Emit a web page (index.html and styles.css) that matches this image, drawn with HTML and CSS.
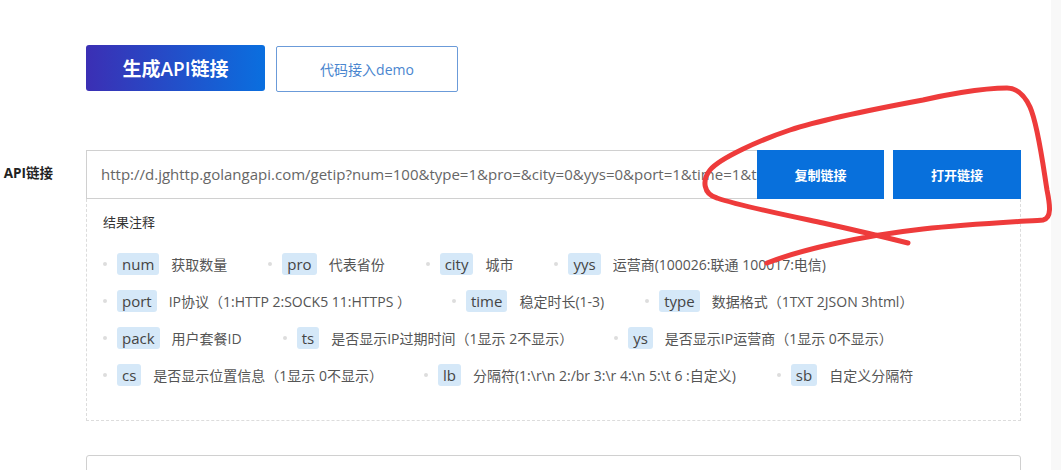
FILE: index.html
```html
<!DOCTYPE html>
<html lang="zh-CN">
<head>
    <meta charset="UTF-8">
    <meta name="viewport" content="width=device-width, initial-scale=1.0">
    <title>API链接</title>
    <link rel="stylesheet" href="styles.css">
</head>
<body>
    <div class="page">
        <div class="actions">
            <button class="btn-generate">生成API链接</button>
            <button class="btn-demo">代码接入demo</button>
        </div>

        <div class="api-row">
            <div class="api-label">API链接</div>
            <div class="api-main">
                <div class="link-bar">
                    <div class="link-input">http://d.jghttp.golangapi.com/getip?num=100&amp;type=1&amp;pro=&amp;city=0&amp;yys=0&amp;port=1&amp;time=1&amp;ts=0&amp;ys=0&amp;cs=0&amp;lb=1&amp;sb=0&amp;pb=4&amp;mr=1&amp;regions=</div>
                    <button class="btn-link">复制链接</button>
                    <button class="btn-link">打开链接</button>
                </div>

                <div class="notes">
                    <p class="notes-title">结果注释</p>
                    <div class="param-row">
                        <div class="param"><span class="tag">num</span>获取数量</div>
                        <div class="param"><span class="tag">pro</span>代表省份</div>
                        <div class="param"><span class="tag">city</span>城市</div>
                        <div class="param"><span class="tag">yys</span>运营商(100026:联通 100017:电信)</div>
                    </div>
                    <div class="param-row">
                        <div class="param"><span class="tag">port</span>IP协议（1:HTTP 2:SOCK5 11:HTTPS ）</div>
                        <div class="param"><span class="tag">time</span>稳定时长(1-3)</div>
                        <div class="param"><span class="tag">type</span>数据格式（1TXT 2JSON 3html）</div>
                    </div>
                    <div class="param-row">
                        <div class="param"><span class="tag">pack</span>用户套餐ID</div>
                        <div class="param"><span class="tag">ts</span>是否显示IP过期时间（1显示 2不显示）</div>
                        <div class="param"><span class="tag">ys</span>是否显示IP运营商（1显示 0不显示）</div>
                    </div>
                    <div class="param-row">
                        <div class="param"><span class="tag">cs</span>是否显示位置信息（1显示 0不显示）</div>
                        <div class="param"><span class="tag">lb</span>分隔符(1:\r\n 2:/br 3:\r 4:\n 5:\t 6 :自定义)</div>
                        <div class="param"><span class="tag">sb</span>自定义分隔符</div>
                    </div>
                </div>

                <div class="next-box"></div>
            </div>
        </div>
    </div>

    <!-- red marker circle over the link buttons -->
    <svg class="scribble" width="1061" height="470" viewBox="0 0 1061 470">
        <path d="M 767 263 C 800 250, 860 236, 923 229 C 970 224, 1030 221, 1043 220 C 1052 218, 1050 205, 1047 190 C 1043 165, 1038 125, 1030 107 C 1024 94, 1016 88, 1007 88 C 980 88, 940 96, 923 100 C 880 108, 820 120, 790 130 C 760 140, 720 158, 710 170 C 702 180, 703 194, 717 198 C 740 206, 790 216, 823 223 C 850 229, 880 236, 908 243" fill="none" stroke="#ee3b3b" stroke-width="5" stroke-linecap="round" stroke-linejoin="round"/>
    </svg>
</body>
</html>
```

FILE: styles.css
```css
:root {
    --blue: #0870dc;
    --tag-bg: #d5e8f8;
    --text: #444;
    --border: #d0d0d0;
}

* {
    margin: 0;
    padding: 0;
    box-sizing: border-box;
}

body {
    font-family: "Open Sans", "Noto Sans CJK SC", sans-serif;
    color: var(--text);
    background: linear-gradient(to right, #fff 1051px, #f8f8f8 1051px);
    overflow: hidden;
}

.page {
    padding-top: 45px;
}

.actions {
    display: flex;
    gap: 11px;
    padding-left: 86px;
}

button {
    font-family: inherit;
    cursor: pointer;
}

.btn-generate {
    width: 179px;
    height: 46px;
    border: none;
    border-radius: 3px;
    background: linear-gradient(90deg, #3b2fb4, #0a6fdf);
    color: #fff;
    font-size: 19px;
    font-weight: 600;
}

.btn-demo {
    width: 182px;
    height: 46px;
    margin-top: 1px;
    border: 1px solid #6b9bd9;
    border-radius: 2px;
    background: #fff;
    color: #4a86cf;
    font-size: 14px;
}

.api-row {
    display: flex;
    margin-top: 58px;
}

.api-label {
    width: 86px;
    padding-right: 33px;
    line-height: 47px;
    text-align: right;
    font-size: 13.5px;
    font-weight: 700;
    color: #222;
    white-space: nowrap;
}

.api-main {
    width: 935px;
}

.link-bar {
    display: flex;
    height: 49px;
}

.link-input {
    flex: 1;
    min-width: 0;
    padding-left: 14px;
    border: 1px solid var(--border);
    border-right: none;
    line-height: 47px;
    font-size: 15px;
    color: #666;
    white-space: nowrap;
    overflow: hidden;
}

.btn-link {
    width: 127px;
    border: none;
    background: var(--blue);
    color: #fff;
    font-size: 13px;
    font-weight: 600;
}

.btn-link + .btn-link {
    width: 128px;
    margin-left: 9px;
}

.notes {
    border: 1px dashed #dcdcdc;
    border-top: none;
    padding: 13px 0 34px 16px;
}

.notes-title {
    font-size: 13px;
    line-height: 20px;
    color: #333;
    margin-bottom: 21px;
}

.param-row {
    display: flex;
    align-items: center;
    gap: 41px;
    height: 22px;
    margin-bottom: 15px;
}

.param-row:last-child {
    margin-bottom: 0;
}

.param {
    display: flex;
    align-items: center;
    font-size: 14px;
    color: #555;
    white-space: nowrap;
}

.param::before {
    content: "";
    width: 4px;
    height: 4px;
    border-radius: 50%;
    background: #ddd;
    margin: 0 10px 0 0;
}

.tag {
    display: inline-block;
    height: 22px;
    line-height: 22px;
    padding: 0 5px;
    margin-right: 12px;
    border-radius: 3px;
    background: var(--tag-bg);
    color: #444;
    font-size: 15px;
}

.next-box {
    height: 40px;
    margin-top: 34px;
    border: 1px solid var(--border);
    border-radius: 3px;
}

.scribble {
    position: absolute;
    top: 0;
    left: 0;
    pointer-events: none;
}
```
